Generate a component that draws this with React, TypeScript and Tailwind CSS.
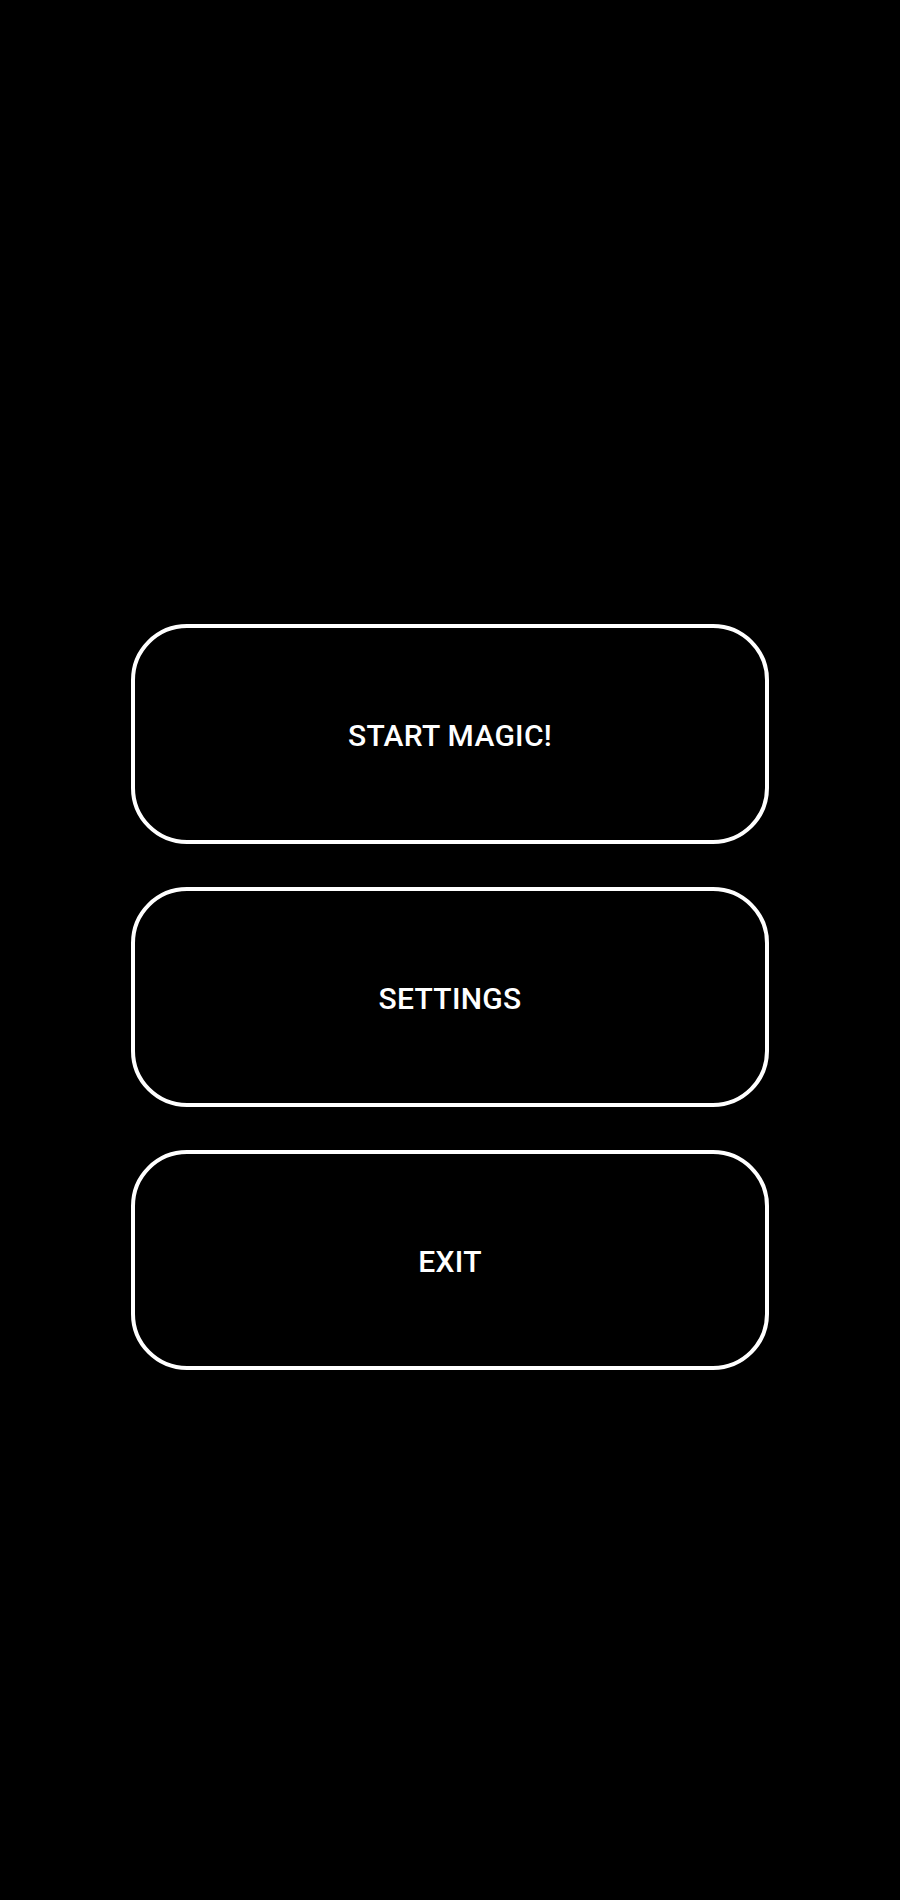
export default function App() {
  const items = ["START MAGIC!", "SETTINGS", "EXIT"];
  return (
    <div className="w-[900px] h-[1900px] bg-black pt-[624px] font-['Roboto',sans-serif]">
      <div className="flex flex-col items-center gap-[43px]">
        {items.map((label) => (
          <button
            key={label}
            className="w-[638px] h-[220px] rounded-[56px] border-4 border-white bg-black text-white text-[30px] font-medium tracking-[0.3px] pt-[3px] flex items-center justify-center"
          >
            {label}
          </button>
        ))}
      </div>
    </div>
  );
}
